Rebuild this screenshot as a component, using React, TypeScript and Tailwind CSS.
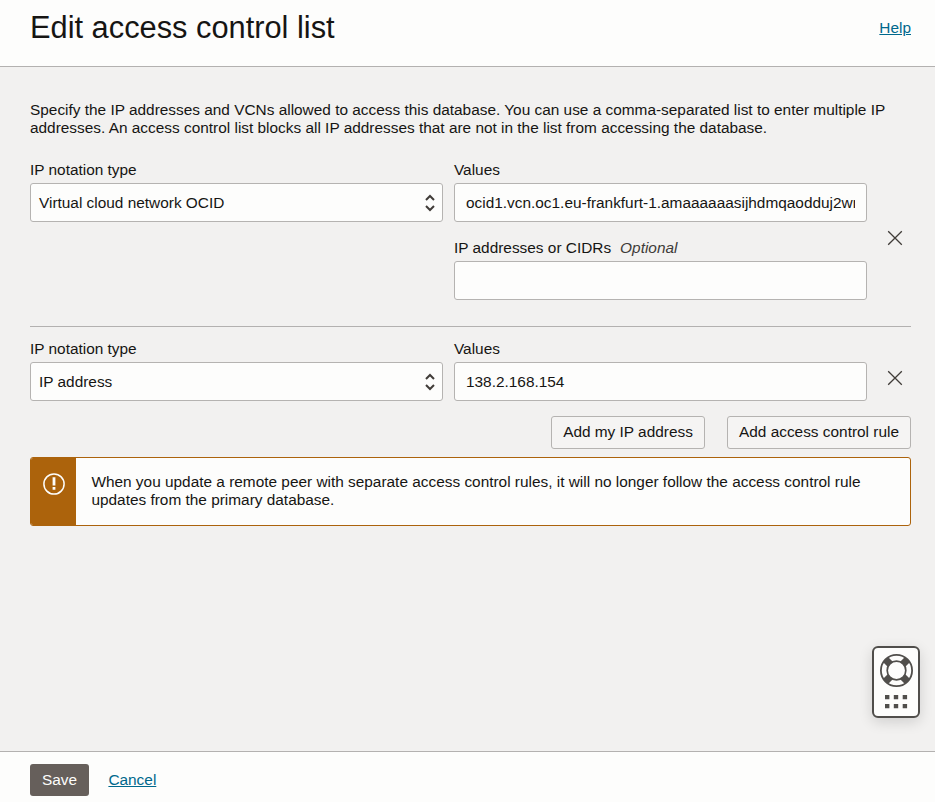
import type { ReactNode } from "react";

function Field({ label, hint, children }: { label: string; hint?: string; children: ReactNode }) {
  return (
    <div className="w-[413px]">
      <div className="h-[22px] leading-[18px] whitespace-pre">
        {label}
        {hint && <span className="ml-[9px] italic text-[#3f3c39]">{hint}</span>}
      </div>
      {children}
    </div>
  );
}

function SelectBox({ value }: { value: string }) {
  return (
    <button className="flex h-[39px] w-full items-center justify-between rounded-[3px] border border-[#b5b3b1] bg-[#fdfdfc] pr-[7px] pl-2 text-left">
      <span>{value}</span>
      <svg width="10" height="18" viewBox="0 0 10 18" fill="none" stroke="#403c38" strokeWidth="2">
        <path d="M1 6 5 2l4 4M1 12l4 4 4-4" />
      </svg>
    </button>
  );
}

function TextBox({ value }: { value: string }) {
  return (
    <div className="flex h-[39px] w-full items-center rounded-[3px] border border-[#b5b3b1] bg-[#fdfdfc] px-[11px]">
      <div className="w-full overflow-hidden whitespace-nowrap">{value}</div>
    </div>
  );
}

function RemoveButton() {
  return (
    <button aria-label="Remove" className="ml-5 h-4 w-4">
      <svg width="16" height="16" viewBox="0 0 16 16" fill="none" stroke="#403c38" strokeWidth="1.3">
        <path d="m1.2 1.2 13.6 13.6M14.8 1.2 1.2 14.8" />
      </svg>
    </button>
  );
}

function HelpWidget() {
  return (
    <button
      aria-label="Support"
      className="absolute top-[646px] left-[872px] h-[72px] w-12 rounded-[6px] border-2 border-[#504e4b] bg-[#fdfdfc] shadow-[0_4px_14px_rgba(0,0,0,0.14)]"
    >
      <svg className="block" width="44" height="68" viewBox="0 0 44 68" fill="none">
        <path d="m11.5 11.5 22 22M33.5 11.5l-22 22" stroke="#504e4b" strokeWidth="7.2" />
        <circle cx="22.5" cy="22.5" r="9.3" fill="#fdfdfc" stroke="#504e4b" strokeWidth="1.7" />
        <circle cx="22.5" cy="22.5" r="15.6" stroke="#504e4b" strokeWidth="1.8" />
        <path fill="#504e4b" d="M11 47h4.4v4.2h-4.4zM19.8 47h4.4v4.2h-4.4zM28.7 47h4.4v4.2h-4.4zM11 56h4.4v4.2h-4.4zM19.8 56h4.4v4.2h-4.4zM28.7 56h4.4v4.2h-4.4z" />
      </svg>
    </button>
  );
}

export default function App() {
  return (
    <div className="relative flex h-[802px] w-[935px] flex-col overflow-hidden bg-[#f2f1f0] font-['Liberation_Sans',Arial,sans-serif] text-[15.4px] leading-[18px] text-[#161513]">
      <header className="flex h-[67px] shrink-0 justify-between border-b border-[#b3b1b0] bg-[#fdfdfc] pr-6 pl-[30px]">
        <h1 className="pt-[10px] text-[30.8px] leading-9">Edit access control list</h1>
        <a className="pt-[19px] text-[#00688c] underline">Help</a>
      </header>

      <main className="flex-1 px-[30px] pr-6 pt-[34px]">
        <p className="whitespace-nowrap">
          Specify the IP addresses and VCNs allowed to access this database. You can use a comma-separated list to enter multiple IP
          <br />
          addresses. An access control list blocks all IP addresses that are not in the list from accessing the database.
        </p>

        <section className="mt-6 flex h-[166px] border-b border-[#b3b1b0]">
          <Field label="IP notation type">
            <SelectBox value="Virtual cloud network OCID" />
          </Field>
          <div className="ml-[11px] flex flex-col gap-[17px]">
            <Field label="Values">
              <TextBox value="ocid1.vcn.oc1.eu-frankfurt-1.amaaaaaasijhdmqaodduj2wr" />
            </Field>
            <Field label="IP addresses or CIDRs" hint="Optional">
              <TextBox value="" />
            </Field>
          </div>
          <div className="pt-[69px]">
            <RemoveButton />
          </div>
        </section>

        <section className="mt-[13px] flex">
          <Field label="IP notation type">
            <SelectBox value="IP address" />
          </Field>
          <div className="ml-[11px]">
            <Field label="Values">
              <TextBox value="138.2.168.154" />
            </Field>
          </div>
          <div className="pt-[30px]">
            <RemoveButton />
          </div>
        </section>

        <div className="mt-[15px] flex justify-end gap-[22px]">
          <button className="h-[33px] w-[154px] rounded-[3px] border border-[#b5b3b1] bg-[#f5f4f3] pb-px whitespace-nowrap">Add my IP address</button>
          <button className="h-[33px] w-[184px] rounded-[3px] border border-[#b5b3b1] bg-[#f5f4f3] pb-px whitespace-nowrap">Add access control rule</button>
        </div>

        <div className="mt-2 flex h-[69px] overflow-hidden rounded-[3px] border border-[#ac630c] bg-[#fdfdfc]">
          <div className="w-[45px] shrink-0 bg-[#ac630c] pt-[15px] pl-3">
            <svg width="22" height="22" viewBox="0 0 22 22" fill="none" stroke="#fdfdfc">
              <circle cx="11" cy="11" r="10.1" strokeWidth="1.5" />
              <path d="M11 4.2v8.3M11 14v2.8" strokeWidth="2.8" />
            </svg>
          </div>
          <p className="pt-[15px] pl-[15.4px] whitespace-nowrap">
            When you update a remote peer with separate access control rules, it will no longer follow the access control rule
            <br />
            updates from the primary database.
          </p>
        </div>
      </main>

      <footer className="flex h-[51px] shrink-0 border-t border-[#b3b1b0] bg-[#fdfdfc] pt-3 pl-[30px]">
        <button className="h-8 w-[59px] rounded-[3px] bg-[#665f5b] text-[#fdfdfc]">Save</button>
        <a className="ml-[19.4px] h-8 leading-8 text-[#00688c] underline">Cancel</a>
      </footer>

      <HelpWidget />
    </div>
  );
}
